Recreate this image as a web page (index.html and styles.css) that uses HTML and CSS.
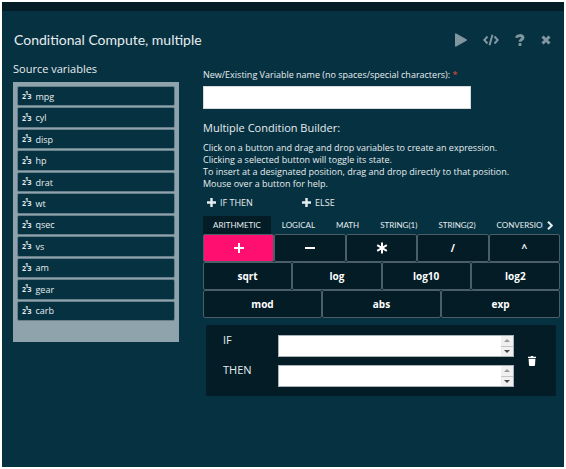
FILE: index.html
```
<!DOCTYPE html>
<html lang="en">
    <head>
        <meta charset="utf-8">
        <title>Conditional Compute, multiple</title>
        <link rel="stylesheet" href="styles.css">
    </head>
    <body>
        <div class="top-bar"></div>
        <main class="dialog">
            <header class="header">
                <h1 class="title">Conditional Compute, multiple</h1>
                <div class="actions">
                    <button class="icon-button" aria-label="Run">
                        <svg width="12" height="14" viewBox="0 0 12 14"><path d="M0 1.2Q0 0 1.2.5L11.5 6.2Q12.3 7 11.5 7.8L1.2 13.5Q0 14 0 12.8Z"/></svg>
                    </button>
                    <button class="icon-button" aria-label="Code">
                        <svg width="16" height="12" viewBox="0 0 16 12"><path class="line" d="M4.5 2.5 1.3 6l3.2 3.5M11.5 2.5 14.7 6l-3.2 3.5M9.5.8l-3 10.4"/></svg>
                    </button>
                    <button class="icon-button" aria-label="Help">
                        <svg width="10" height="12" viewBox="0 0 10 12"><path class="mark" d="M1.5 3.8C2 1 8 .8 8 3.8c0 1.8-3 1.6-3 4"/><rect x="3.5" y="9" width="3" height="3" rx="1"/></svg>
                    </button>
                    <button class="icon-button" aria-label="Close">
                        <svg width="10" height="10" viewBox="0 0 10 10"><path class="mark" d="M1.5 1.5l7 7M8.5 1.5l-7 7"/></svg>
                    </button>
                </div>
            </header>

            <div class="columns">
                <section class="source">
                    <h2 class="heading">Source variables</h2>
                    <ul class="variables">
                        <li class="variable"><span class="scale"><span>2</span><sup>1</sup><span>3</span></span>mpg</li>
                        <li class="variable"><span class="scale"><span>2</span><sup>1</sup><span>3</span></span>cyl</li>
                        <li class="variable"><span class="scale"><span>2</span><sup>1</sup><span>3</span></span>disp</li>
                        <li class="variable"><span class="scale"><span>2</span><sup>1</sup><span>3</span></span>hp</li>
                        <li class="variable"><span class="scale"><span>2</span><sup>1</sup><span>3</span></span>drat</li>
                        <li class="variable"><span class="scale"><span>2</span><sup>1</sup><span>3</span></span>wt</li>
                        <li class="variable"><span class="scale"><span>2</span><sup>1</sup><span>3</span></span>qsec</li>
                        <li class="variable"><span class="scale"><span>2</span><sup>1</sup><span>3</span></span>vs</li>
                        <li class="variable"><span class="scale"><span>2</span><sup>1</sup><span>3</span></span>am</li>
                        <li class="variable"><span class="scale"><span>2</span><sup>1</sup><span>3</span></span>gear</li>
                        <li class="variable"><span class="scale"><span>2</span><sup>1</sup><span>3</span></span>carb</li>
                    </ul>
                </section>

                <section class="builder">
                    <label class="name-label" for="var-name">New/Existing Variable name (no spaces/special characters): <span class="required">*</span></label>
                    <input class="name-input" id="var-name" type="text">

                    <h2 class="heading builder-heading">Multiple Condition Builder:</h2>
                    <p class="help">
                        Click on a button and drag and drop variables to create an expression.<br>
                        Clicking a selected button will toggle its state.<br>
                        To insert at a designated position, drag and drop directly to that position.<br>
                        Mouse over a button for help.
                    </p>

                    <div class="add-row">
                        <button class="add-button"><svg width="9" height="9" viewBox="0 0 9 9"><path d="M3.3 0h2.4v3.3H9v2.4H5.7V9H3.3V5.7H0V3.3h3.3z"/></svg>IF THEN</button>
                        <button class="add-button"><svg width="9" height="9" viewBox="0 0 9 9"><path d="M3.3 0h2.4v3.3H9v2.4H5.7V9H3.3V5.7H0V3.3h3.3z"/></svg>ELSE</button>
                    </div>

                    <div class="tab-bar">
                        <div class="tabs">
                            <button class="tab tab-active">ARITHMETIC</button>
                            <button class="tab">LOGICAL</button>
                            <button class="tab">MATH</button>
                            <button class="tab">STRING(1)</button>
                            <button class="tab">STRING(2)</button>
                            <button class="tab">CONVERSION</button>
                        </div>
                        <button class="tab-next" aria-label="More tabs">
                            <svg width="6" height="9" viewBox="0 0 6 9"><path class="line" d="M1 .8 4.8 4.5 1 8.2"/></svg>
                        </button>
                    </div>

                    <div class="keys">
                        <div class="key-row">
                            <button class="key key-selected" aria-label="plus"><svg width="10" height="10" viewBox="0 0 10 10"><path d="M4 0h2v4h4v2H6v4H4V6H0V4h4z"/></svg></button>
                            <button class="key" aria-label="minus"><svg width="10" height="10" viewBox="0 0 10 10"><path d="M0 4h10v2H0z"/></svg></button>
                            <button class="key" aria-label="times"><svg width="12" height="12" viewBox="0 0 12 12"><path class="mark" d="M6 .5v11M1.2 3.2l9.6 5.6M10.8 3.2 1.2 8.8"/></svg></button>
                            <button class="key">/</button>
                            <button class="key">^</button>
                        </div>
                        <div class="key-row">
                            <button class="key">sqrt</button>
                            <button class="key">log</button>
                            <button class="key">log10</button>
                            <button class="key">log2</button>
                        </div>
                        <div class="key-row">
                            <button class="key">mod</button>
                            <button class="key">abs</button>
                            <button class="key">exp</button>
                        </div>
                    </div>

                    <div class="condition">
                        <div class="fields">
                            <label class="field-label" for="if-expr">IF</label>
                            <div class="field">
                                <textarea class="field-text" id="if-expr"></textarea>
                                <div class="scroll">
                                    <button class="scroll-up" aria-label="Scroll up"></button>
                                    <button class="scroll-down" aria-label="Scroll down"></button>
                                </div>
                            </div>
                            <label class="field-label" for="then-expr">THEN</label>
                            <div class="field">
                                <textarea class="field-text" id="then-expr"></textarea>
                                <div class="scroll">
                                    <button class="scroll-up" aria-label="Scroll up"></button>
                                    <button class="scroll-down" aria-label="Scroll down"></button>
                                </div>
                            </div>
                        </div>
                        <button class="delete" aria-label="Delete">
                            <svg width="8" height="10" viewBox="0 0 8 10"><path d="M0 .8h2.5L3 0h2l.5.8H8v1.3H0zM.6 2.8h6.8L7 9.2q-.1.8-.8.8H1.8Q1.1 10 1 9.2z"/></svg>
                        </button>
                    </div>
                </section>
            </div>
        </main>
    </body>
</html>
```
FILE: styles.css
```
*{
    box-sizing: border-box;
}
body{
    margin: 0;
    min-height: 100vh;
    display: flex;
    flex-direction: column;
    border: 2px solid white;
    background-color: #063140;
    color: #e6edf0;
    font-family: "Open Sans", "Noto Sans", sans-serif;
    font-size: 9px;
}
button{
    padding: 0;
    border: none;
    background: none;
    color: inherit;
    font: inherit;
    cursor: pointer;
}
svg{
    display: block;
    fill: currentColor;
}
.line, .mark{
    fill: none;
    stroke: currentColor;
    stroke-width: 2;
}
.mark{
    stroke-width: 3;
}
.top-bar{
    height: 9px;
    background-color: #031c26;
}
.dialog{
    padding: 18px 4px 0 11px;
}
.header{
    display: flex;
    align-items: center;
    justify-content: space-between;
    height: 22px;
    padding: 0 9px 0 1px;
}
.title{
    margin: 0;
    font-family: Lato, sans-serif;
    font-size: 14px;
    line-height: 20px;
    font-weight: normal;
}
.actions{
    display: flex;
    align-items: center;
    gap: 16px;
    color: #8197a0;
}
.columns{
    display: grid;
    grid-template-columns: 166px minmax(0, 1fr);
    gap: 24px;
    padding-top: 9px;
}
.heading{
    margin: 0;
    font-size: 11px;
    line-height: 18px;
    font-weight: normal;
}
.variables{
    display: grid;
    grid-auto-rows: 1fr;
    gap: 1px;
    height: 260px;
    margin: 4px 0 0;
    padding: 4px 4px 21px;
    list-style: none;
    background-color: #8fa3ad;
}
.variable{
    display: flex;
    align-items: center;
    gap: 4px;
    padding-left: 4px;
    border: 1px solid #667f8a;
    border-radius: 2px;
    background-color: #063140;
}
.scale{
    display: flex;
    font-size: 7px;
    line-height: 10px;
    font-weight: bold;
    padding-top: 2px;
}
.scale sup{
    font-size: 6px;
    line-height: 6px;
    margin: -2px -1px 0;
}
.name-label{
    display: block;
    margin-top: 7px;
    line-height: 16px;
}
.required{
    color: #f04a30;
}
.name-input{
    display: block;
    width: 75%;
    height: 23px;
    margin-top: 3px;
    border: 1px solid #d5dadd;
    background-color: white;
}
.builder-heading{
    margin-top: 10px;
}
.help{
    margin: 5px 0 0;
    line-height: 12px;
}
.add-row{
    display: grid;
    grid-template-columns: 95px 95px;
    padding: 5px 4px 0;
}
.add-button{
    display: flex;
    align-items: center;
    gap: 4px;
    height: 14px;
}
.tab-bar{
    display: flex;
    height: 18px;
    margin-top: 7px;
}
.tabs{
    display: flex;
    flex: 1;
    gap: 1px;
    min-width: 0;
    overflow: hidden;
}
.tab{
    flex: none;
    padding: 0 10px;
    font-family: Lato, sans-serif;
    font-size: 8px;
}
.tab-active{
    background-color: #031c26;
}
.tab-next{
    width: 17px;
    padding-left: 4px;
}
.key-row{
    display: flex;
}
.key{
    display: flex;
    align-items: center;
    justify-content: center;
    flex: 1;
    height: 28px;
    border: 1px solid #4a5f68;
    border-radius: 2px;
    background-color: #031c26;
    color: white;
    font-size: 10px;
    font-weight: bold;
}
.key .mark{
    stroke-width: 2;
}
.key-selected{
    background-color: #ff0f6f;
}
.condition{
    display: flex;
    align-items: center;
    gap: 14px;
    margin: 7px 4px 0 3px;
    padding: 10px 20px 9px 17px;
    border-radius: 2px;
    background-color: #031c26;
}
.fields{
    display: grid;
    grid-template-columns: 55px 1fr;
    row-gap: 8px;
    flex: 1;
}
.field-label{
    font-size: 11px;
    line-height: 10px;
}
.field{
    display: flex;
    height: 22px;
    border: 1px solid #a9b4b9;
    background-color: white;
}
.field-text{
    flex: 1;
    min-width: 0;
    padding: 0;
    border: none;
    resize: none;
}
.scroll{
    display: grid;
    grid-template-rows: 1fr 1fr;
    gap: 1px;
    width: 12px;
    background-color: #c5c5c5;
}
.scroll-up, .scroll-down{
    display: flex;
    align-items: center;
    justify-content: center;
    background-color: #f0f0f0;
}
.scroll-up::before, .scroll-down::before{
    content: "";
    border: 3px solid transparent;
    border-top: none;
    border-bottom-color: #999999;
}
.scroll-down::before{
    border-bottom: none;
    border-top: 3px solid #444444;
}
.delete{
    color: white;
}
```
